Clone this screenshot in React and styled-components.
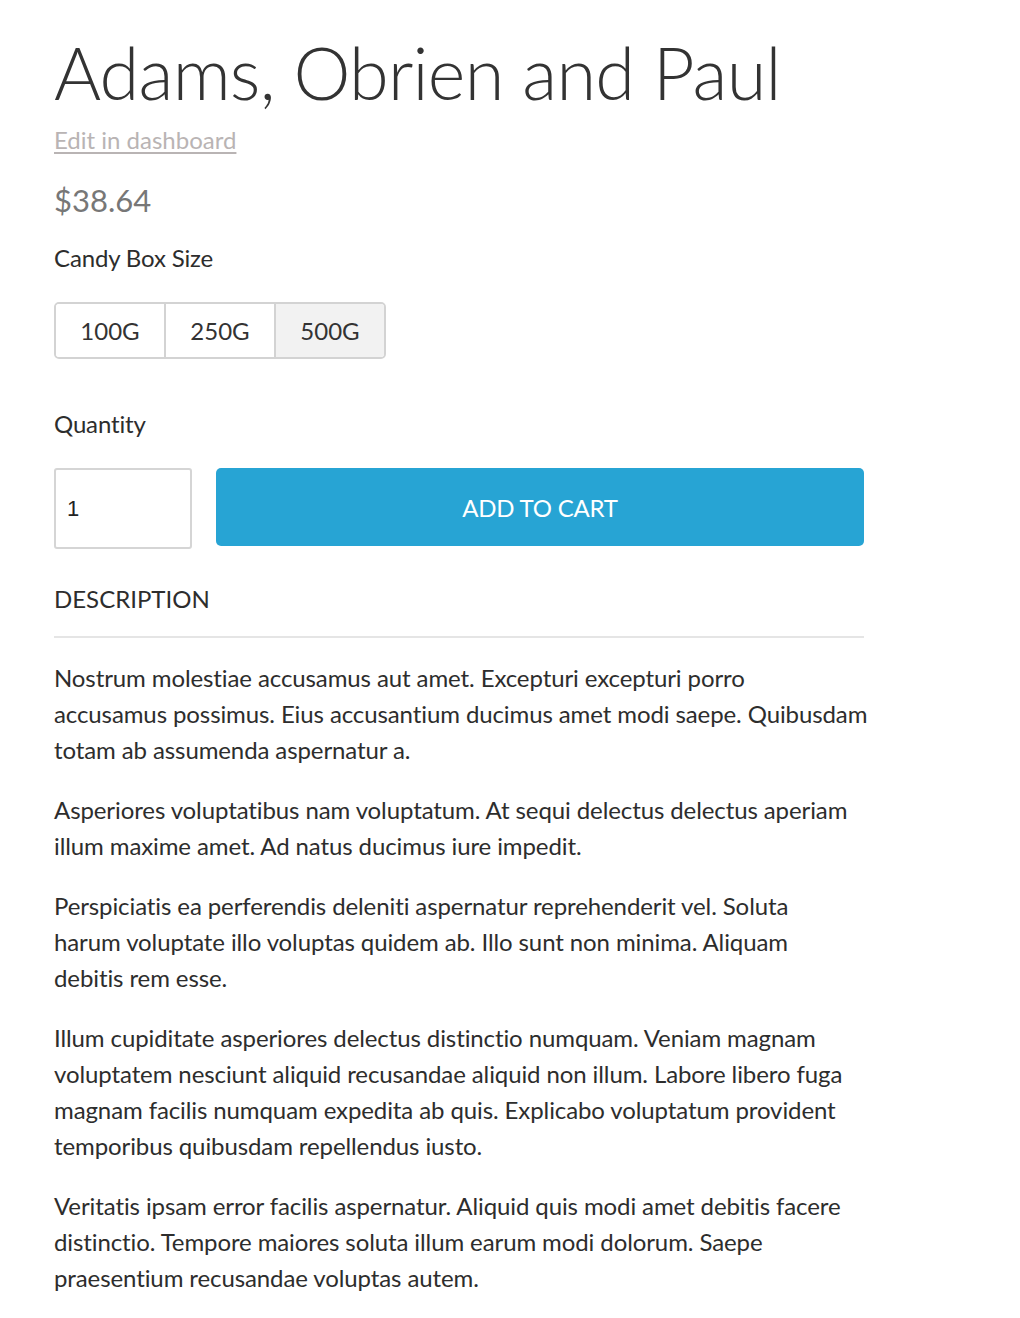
import React from "react";
import styled, { createGlobalStyle } from "styled-components";

const Global = createGlobalStyle`
  html, body { margin: 0; padding: 0; background: #fff; }
  body {
    font-family: Lato, "Open Sans", sans-serif;
    color: #333;
    font-variant-ligatures: none;
  }
  * { box-sizing: border-box; }
`;

const Page = styled.main`
  width: 810px;
  margin-left: 54px;
  padding-top: 27px;
`;

const Title = styled.h1`
  margin: 0;
  font-weight: 300;
  font-size: 72px;
  line-height: 90px;
  letter-spacing: -0.75px;
  color: #333;
`;

const EditRow = styled.div`
  margin-top: 8px;
  font-size: 24px;
  line-height: 30px;
`;

const EditLink = styled.a`
  color: #b9b4b4;
  text-decoration: underline;
  text-decoration-thickness: 2px;
  text-underline-offset: 3px;
`;

const Price = styled.div`
  margin-top: 27px;
  font-size: 31px;
  line-height: 36px;
  color: #777;
`;

const Label = styled.div`
  margin-top: ${(p) => p.$mt}px;
  font-size: 24px;
  line-height: 30px;
  letter-spacing: -0.15px;
  color: #2d2d2d;
`;

const SizeGroup = styled.div`
  display: inline-flex;
  margin-top: 29px;
  border: 2px solid #d3d3d3;
  border-radius: 5px;
  overflow: hidden;
`;

const SizeOption = styled.button`
  width: ${(p) => (p.$first ? 108 : 110)}px;
  height: 53px;
  border: none;
  border-left: ${(p) => (p.$first ? "none" : "2px solid #d3d3d3")};
  background: ${(p) => (p.$active ? "#f2f2f2" : "#fff")};
  font-family: inherit;
  font-size: 24px;
  color: #333;
  padding: 0;
`;

const BuyRow = styled.div`
  display: flex;
  align-items: flex-start;
  gap: 24px;
  margin-top: 29px;
`;

const QtyInput = styled.input`
  width: 138px;
  height: 81px;
  border: 2px solid #d5d5d5;
  border-radius: 3px;
  padding: 0 11px;
  font-family: Arial, "Liberation Sans", sans-serif;
  font-size: 22px;
  color: #222;
  outline: none;
`;

const CartButton = styled.button`
  flex: 1;
  height: 78px;
  border: none;
  border-radius: 5px;
  background: #27a4d4;
  color: #fff;
  font-family: inherit;
  font-size: 24px;
  letter-spacing: -0.2px;
`;

const SectionTitle = styled.h2`
  margin: 35px 0 0;
  padding-bottom: 22px;
  border-bottom: 2px solid #e5e5e5;
  font-size: 24px;
  font-weight: 400;
  line-height: 30px;
  color: #2d2d2d;
`;

const Body = styled.div`
  padding-top: 22px;
  padding-bottom: 20px;
`;

const Para = styled.p`
  margin: 0 0 24px;
  font-size: 24px;
  line-height: 36px;
  letter-spacing: -0.1px;
  color: #2d2d2d;
`;

const Line = styled.span`
  display: block;
  white-space: nowrap;
`;

const paragraphs = [
  [
    "Nostrum molestiae accusamus aut amet. Excepturi excepturi porro",
    "accusamus possimus. Eius accusantium ducimus amet modi saepe. Quibusdam",
    "totam ab assumenda aspernatur a.",
  ],
  [
    "Asperiores voluptatibus nam voluptatum. At sequi delectus delectus aperiam",
    "illum maxime amet. Ad natus ducimus iure impedit.",
  ],
  [
    "Perspiciatis ea perferendis deleniti aspernatur reprehenderit vel. Soluta",
    "harum voluptate illo voluptas quidem ab. Illo sunt non minima. Aliquam",
    "debitis rem esse.",
  ],
  [
    "Illum cupiditate asperiores delectus distinctio numquam. Veniam magnam",
    "voluptatem nesciunt aliquid recusandae aliquid non illum. Labore libero fuga",
    "magnam facilis numquam expedita ab quis. Explicabo voluptatum provident",
    "temporibus quibusdam repellendus iusto.",
  ],
  [
    "Veritatis ipsam error facilis aspernatur. Aliquid quis modi amet debitis facere",
    "distinctio. Tempore maiores soluta illum earum modi dolorum. Saepe",
    "praesentium recusandae voluptas autem.",
  ],
];

const sizes = ["100G", "250G", "500G"];

export default function App() {
  return (
    <>
      <Global />
      <Page>
        <Title>Adams, Obrien and Paul</Title>
        <EditRow>
          <EditLink href="#">Edit in dashboard</EditLink>
        </EditRow>
        <Price>$38.64</Price>
        <Label $mt={25}>Candy Box Size</Label>
        <div>
          <SizeGroup>
            {sizes.map((s, i) => (
              <SizeOption key={s} $first={i === 0} $active={i === 2}>
                {s}
              </SizeOption>
            ))}
          </SizeGroup>
        </div>
        <Label $mt={50}>Quantity</Label>
        <BuyRow>
          <QtyInput defaultValue="1" />
          <CartButton>ADD TO CART</CartButton>
        </BuyRow>
        <SectionTitle>DESCRIPTION</SectionTitle>
        <Body>
          {paragraphs.map((lines, i) => (
            <Para key={i}>
              {lines.map((l, j) => (
                <Line key={j}>{l}</Line>
              ))}
            </Para>
          ))}
        </Body>
      </Page>
    </>
  );
}
